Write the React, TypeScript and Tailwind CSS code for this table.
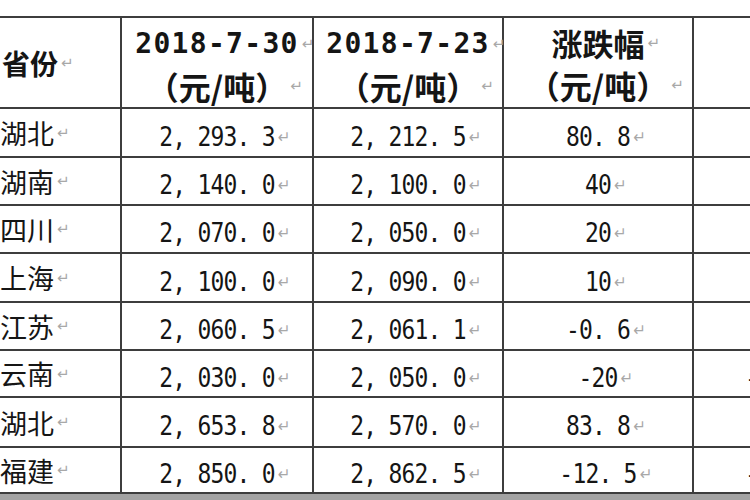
import React from 'react';

const rows: string[][] = [
  ['湖北', '2,293.3', '2,212.5', '80.8', ''],
  ['湖南', '2,140.0', '2,100.0', '40', ''],
  ['四川', '2,070.0', '2,050.0', '20', ''],
  ['上海', '2,100.0', '2,090.0', '10', ''],
  ['江苏', '2,060.5', '2,061.1', '-0.6', ''],
  ['云南', '2,030.0', '2,050.0', '-20', '-0.98%'],
  ['湖北', '2,653.8', '2,570.0', '83.8', ''],
  ['福建', '2,850.0', '2,862.5', '-12.5', '-0.44%'],
];

const cjk = "font-['Noto_Sans_CJK_SC',sans-serif]";
const mono = "font-['DejaVu_Sans_Mono',monospace]";

// Word paragraph mark, hangs after the text without shifting its centre
function Mark() {
  return (
    <span className="absolute left-full top-1/2 -translate-y-1/2 ml-[3px] text-[15px] leading-none tracking-normal font-normal text-[#a8a8a8] font-['DejaVu_Sans',sans-serif]">
      ↵
    </span>
  );
}

function Txt({ children, className = '' }: { children: React.ReactNode; className?: string }) {
  return (
    <span className={`relative inline-block ${className}`}>
      {children}
      <Mark />
    </span>
  );
}

// SimSun-style number: comma and point take a wide slot
function Num({ v }: { v: string }) {
  return (
    <Txt className={`${mono} text-[23px] tracking-[-0.8px] leading-none scale-y-[1.15]`}>
      {v.split('').map((c, k) =>
        c === ',' || c === '.' ? (
          <span key={k} className="mr-[12px]">{c}</span>
        ) : (
          <span key={k}>{c}</span>
        )
      )}
    </Txt>
  );
}

export default function App() {
  return (
    <div className="w-[750px] h-[500px] overflow-hidden bg-white pt-[16px] flex flex-col text-[#151515]">
      <div className="grid w-max grid-cols-[120px_190px_188px_188px_200px] grid-rows-[89px_47px_46px_46px_47px_46px_45px_48px_44px] gap-[2px] bg-[#3d3d3d] border-y-2 border-[#3d3d3d]">
        {/* header */}
        <div className="bg-white flex items-center pl-[2px]">
          <Txt className={`${cjk} text-[28px] font-bold leading-none`}>省份</Txt>
        </div>
        {['2018-7-30', '2018-7-23'].map((d) => (
          <div key={d} className="bg-white flex flex-col items-center justify-center pt-[4px]">
            <div className="h-[42px] flex items-center">
              <Txt className={`${mono} text-[28px] font-bold tracking-[1.3px] leading-none`}>{d}</Txt>
            </div>
            <div className="h-[42px] flex items-center">
              <Txt className={`${cjk} text-[32px] font-bold leading-none`}>（元/吨）</Txt>
            </div>
          </div>
        ))}
        <div className="bg-white flex flex-col items-center justify-center pt-[4px]">
          <div className="h-[42px] flex items-center -mt-[2px]">
            <Txt className={`${cjk} text-[31px] font-bold leading-none`}>涨跌幅</Txt>
          </div>
          <div className="h-[42px] flex items-center">
            <Txt className={`${cjk} text-[32px] font-bold leading-none`}>（元/吨）</Txt>
          </div>
        </div>
        <div className="bg-white" />

        {/* body */}
        {rows.map((r, i) => (
          <React.Fragment key={i}>
            <div className="bg-white flex items-center">
              <Txt className={`${cjk} text-[27px] leading-none`}>{r[0]}</Txt>
            </div>
            {r.slice(1, 4).map((v, j) => (
              <div key={j} className="bg-white flex items-center justify-center pt-[9px]">
                <Num v={v} />
              </div>
            ))}
            <div className="bg-white flex items-center pl-[51px] pt-[9px]">
              <span className={`${mono} text-[23px] tracking-[-0.8px] leading-none`}>{r[4]}</span>
            </div>
          </React.Fragment>
        ))}
      </div>
      <div className="h-[6px] w-full bg-[#a3a3a3]" />
    </div>
  );
}
